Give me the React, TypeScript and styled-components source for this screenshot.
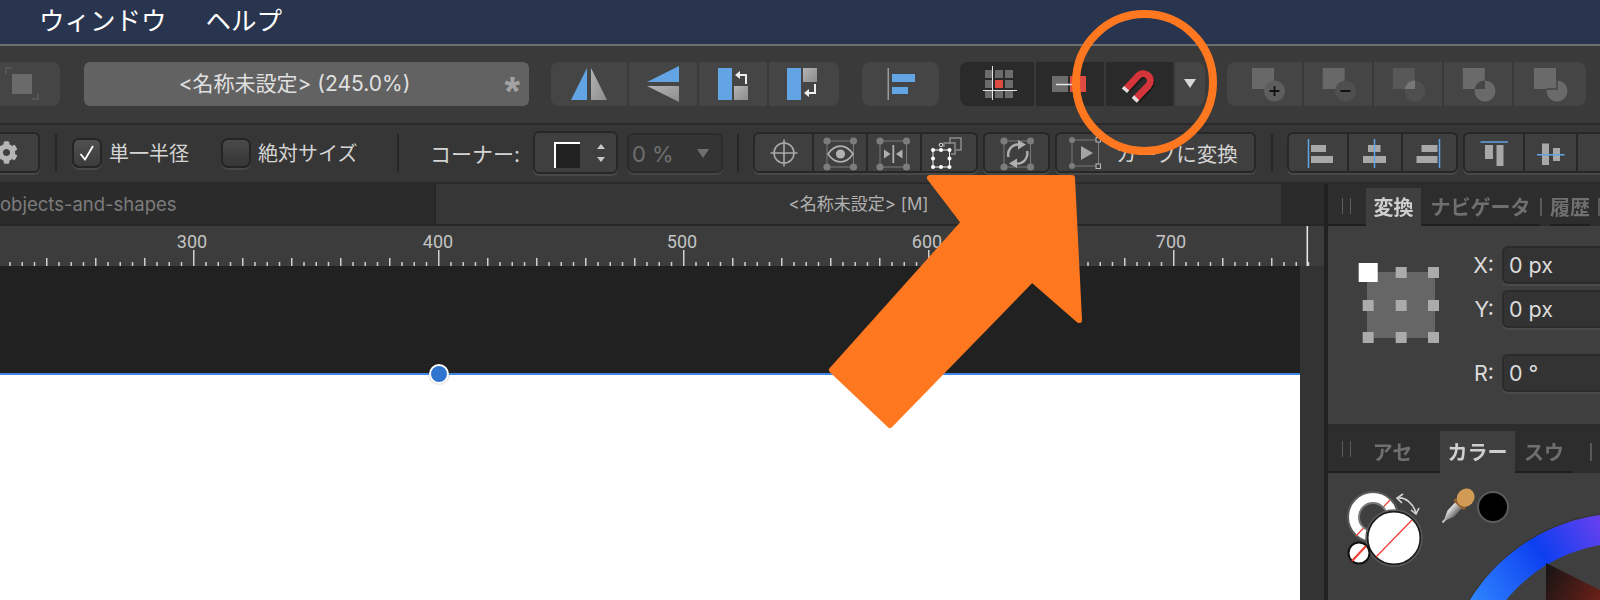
import React from 'react';
import styled, { createGlobalStyle } from 'styled-components';
import { FaCog } from 'react-icons/fa';

const CJK = '"Inter", "Noto Sans CJK JP", sans-serif';

const GlobalStyle = createGlobalStyle`
  html, body {
    margin: 0;
    padding: 0;
    background: #212121;
  }
  * {
    box-sizing: border-box;
  }
`;

const Page = styled.div`
  position: relative;
  width: 1600px;
  height: 600px;
  overflow: hidden;
  font-family: ${CJK};
`;

const MenuBar = styled.div`
  display: flex;
  align-items: center;
  gap: 39px;
  height: 44px;
  padding: 0 0 2px 39px;
  background: #29354f;
  color: #fff;
  font-size: 25.5px;
  line-height: 1;
`;

const RowOne = styled.div`
  display: flex;
  align-items: flex-start;
  height: 81px;
  padding-top: 16px;
  background: #3a3a3a;
  border-top: 2px solid #6e6e6e;
  border-bottom: 2px solid #292929;
  overflow: hidden;
`;

const RowTwo = styled.div`
  display: flex;
  align-items: center;
  height: 59px;
  padding-bottom: 2px;
  background: #363636;
  border-bottom: 2px solid #292929;
  overflow: hidden;
  color: #d4d4d4;
  font-size: 20px;
`;

const FlatGroup = styled.div<{ $w: number; $ml?: number; $dark?: boolean; $cut?: boolean }>`
  display: flex;
  flex: none;
  width: ${p => p.$w}px;
  height: 44px;
  margin-left: ${p => p.$ml || 0}px;
  border-radius: ${p => (p.$cut ? '0 8px 8px 0' : '8px')};
  background: ${p => (p.$dark ? '#2a2a2a' : '#454545')};
  overflow: hidden;
`;

const FlatCell = styled.div<{ $w: number; $first?: boolean; $light?: boolean }>`
  display: flex;
  align-items: center;
  justify-content: center;
  flex: none;
  width: ${p => p.$w}px;
  border-left: ${p => (p.$first ? 'none' : '2px solid #393939')};
  background: ${p => (p.$light ? '#454545' : 'transparent')};
`;

const TitleField = styled.div`
  position: relative;
  flex: none;
  width: 445px;
  height: 44px;
  margin-left: 24px;
  padding-right: 24px;
  border-radius: 6px;
  background: #626262;
  color: #e0e0e0;
  font-size: 21px;
  line-height: 44px;
  text-align: center;
`;

const DirtyStar = styled.span`
  position: absolute;
  top: 7px;
  right: 9px;
  color: #a3a3a3;
  font-family: "Liberation Sans", sans-serif;
  font-size: 40px;
  font-weight: 700;
  line-height: 44px;
`;

const Glyph = styled.svg<{ $w?: number; $h?: number; $mt?: number }>`
  display: block;
  flex: none;
  width: ${p => p.$w || 44}px;
  height: ${p => p.$h || 44}px;
  margin-top: ${p => p.$mt || 0}px;
`;

const InsetGroup = styled.div<{ $w: number; $ml?: number; $h?: number }>`
  display: flex;
  flex: none;
  width: ${p => p.$w}px;
  height: ${p => p.$h || 41}px;
  margin-left: ${p => p.$ml || 0}px;
  border: 2px solid #272727;
  border-radius: 6px;
  background: #3f3f3f;
  box-shadow: 0 2px 0 #484848;
  overflow: hidden;
`;

const InsetCell = styled.div<{ $w?: number; $first?: boolean }>`
  display: flex;
  align-items: center;
  justify-content: center;
  flex: ${p => (p.$w ? 'none' : '1')};
  width: ${p => (p.$w ? `${p.$w}px` : 'auto')};
  border-left: ${p => (p.$first ? 'none' : '2px solid #272727')};
`;

const ConvertCell = styled(InsetCell)`
  justify-content: flex-start;
  padding-left: 12px;
`;

const GearButton = styled(InsetGroup)`
  justify-content: flex-start;
  align-items: center;
  border-left: none;
  border-radius: 0 6px 6px 0;
  color: #b5b5b5;
  svg {
    margin-left: -5px;
  }
`;

const Separator = styled.div<{ $ml: number }>`
  flex: none;
  width: 2px;
  height: 38px;
  margin-left: ${p => p.$ml}px;
  background: #272727;
`;

const CheckItem = styled.label<{ $ml: number; $w: number }>`
  display: flex;
  flex: none;
  align-items: center;
  gap: 7px;
  width: ${p => p.$w}px;
  margin-left: ${p => p.$ml}px;
  white-space: nowrap;
`;

const CheckBox = styled.span<{ $checked?: boolean }>`
  display: flex;
  align-items: center;
  justify-content: center;
  flex: none;
  width: 30px;
  height: 30px;
  border: 2px solid #252525;
  border-radius: 7px;
  background: ${p => (p.$checked ? 'linear-gradient(#505050, #3c3c3c)' : 'linear-gradient(#4a4a4a, #353535)')};
  box-shadow: 0 2px 0 #484848;
`;

const CornerLabel = styled.span`
  flex: none;
  width: 87px;
  margin-left: 31px;
  font-size: 21px;
  white-space: nowrap;
`;

const PercentField = styled.div`
  display: flex;
  flex: none;
  align-items: center;
  justify-content: space-between;
  width: 96px;
  height: 40px;
  margin-left: 9px;
  padding: 2px 12px 0 3px;
  border: 2px solid #2a2a2a;
  border-radius: 6px;
  background: #343434;
  box-shadow: 0 2px 0 #444;
  color: #6f6f6f;
  font-size: 22px;
`;

const ConvertLabel = styled.span`
  margin-left: 15px;
  font-size: 20.5px;
  white-space: nowrap;
`;

const Workspace = styled.div`
  display: flex;
  height: 416px;
`;

const Editor = styled.div`
  display: flex;
  flex-direction: column;
  flex: none;
  width: 1324px;
`;

const DocTabs = styled.div`
  display: flex;
  flex: none;
  height: 42px;
  border-bottom: 2px solid #272727;
  background: #2b2b2b;
  line-height: 40px;
`;

const DocTab = styled.div<{ $w: number; $active?: boolean }>`
  flex: none;
  width: ${p => p.$w}px;
  overflow: hidden;
  white-space: nowrap;
  font-size: ${p => (p.$active ? '17px' : '18.5px')};
  background: ${p => (p.$active ? '#363636' : 'transparent')};
  color: ${p => (p.$active ? '#b0b0b0' : '#7c7c7c')};
  text-align: ${p => (p.$active ? 'center' : 'left')};
  border-right: ${p => (p.$active ? 'none' : '2px solid #272727')};
`;

const RulerBar = styled.svg`
  display: block;
  flex: none;
  width: 1324px;
  height: 40px;
  background: #3c3c3c;
`;

const CanvasRow = styled.div`
  display: flex;
  flex: 1;
`;

const Canvas = styled.div`
  position: relative;
  flex: none;
  width: 1300px;
  background: linear-gradient(#212121 0, #212121 107px, #3f86e0 107px, #3f86e0 109px, #fff 109px);
`;

const Handle = styled.span`
  position: absolute;
  top: 98px;
  left: 429px;
  width: 20px;
  height: 20px;
  border: 2px solid #fff;
  border-radius: 50%;
  background: #2f74cf;
  box-shadow: 0 0 2px rgba(0, 0, 0, 0.35);
`;

const ScrollStrip = styled.div`
  flex: 1;
  background: #333;
`;

const SidePanel = styled.div`
  display: flex;
  flex-direction: column;
  flex: none;
  width: 272px;
  margin-left: 4px;
  background: #3f3f3f;
`;

const TabRow = styled.div<{ $h: number }>`
  display: flex;
  flex: none;
  align-items: stretch;
  height: ${p => p.$h}px;
  padding-top: 4px;
  background: #2d2d2d;
  font-size: 20px;
  font-weight: 700;
`;

const Grip = styled.span`
  flex: none;
  width: 38px;
  position: relative;
  border-bottom: 2px solid #1f1f1f;
  &::after {
    content: '';
    position: absolute;
    top: 10px;
    left: 14px;
    width: 7px;
    height: 16px;
    border-left: 1.5px solid #5c5c5c;
    border-right: 1.5px solid #5c5c5c;
  }
`;

const PanelTab = styled.div<{ $w: number; $active?: boolean; $pr?: number }>`
  display: flex;
  flex: none;
  align-items: center;
  justify-content: center;
  width: ${p => p.$w}px;
  padding-right: ${p => p.$pr || 0}px;
  white-space: nowrap;
  background: ${p => (p.$active ? '#3f3f3f' : 'transparent')};
  border-bottom: 2px solid ${p => (p.$active ? '#3f3f3f' : '#1f1f1f')};
  color: ${p => (p.$active ? '#cfcfcf' : '#6f6f6f')};
  span {
    filter: blur(0.6px);
  }
`;

const TabRule = styled.span<{ $ml?: number }>`
  flex: none;
  width: 2px;
  height: 18px;
  align-self: center;
  margin: 0 8px 0 ${p => p.$ml || 0}px;
  background: #5a5a5a;
`;

const TabFill = styled.div`
  flex: 1;
  border-bottom: 2px solid #1f1f1f;
`;

const TransformBody = styled.div`
  display: flex;
  flex: none;
  height: 201px;
  padding: 20px 0 0 28px;
  border-bottom: 3px solid #2c2c2c;
`;

const FieldColumn = styled.div`
  display: flex;
  flex-direction: column;
  margin-left: 21px;
`;

const FieldRow = styled.div<{ $mt?: number }>`
  display: flex;
  align-items: center;
  gap: 8px;
  height: 38px;
  margin-top: ${p => p.$mt || 0}px;
  color: #dcdcdc;
  font-size: 21.5px;
`;

const FieldLabel = styled.span`
  flex: none;
  width: 27px;
  text-align: right;
`;

const FieldInput = styled.div`
  flex: none;
  width: 120px;
  height: 38px;
  padding-left: 5px;
  border: 2px solid #2b2b2b;
  border-right: none;
  border-radius: 6px 0 0 6px;
  background: #333;
  box-shadow: 0 2px 0 #4a4a4a;
  line-height: 34px;
`;

const ColorBody = styled.svg`
  display: block;
  width: 272px;
  height: 127px;
`;

const Overlay = styled.svg`
  position: absolute;
  top: 0;
  left: 0;
  width: 1600px;
  height: 600px;
  pointer-events: none;
`;

const rulerTicks = Array.from({ length: 108 }, (_, i) => i);
const rulerLabels = [
  { text: '300', x: 192 },
  { text: '400', x: 438 },
  { text: '500', x: 682 },
  { text: '600', x: 927 },
  { text: '700', x: 1171 },
];

const anchorXs = [6.7, 39.7, 72];
const anchorYs = [24, 57, 89];

// corner handles shared by the transform-mode icons
const FrameDots = ({ x1, x2, y1, y2 }: { x1: number; x2: number; y1: number; y2: number }) => (
  <g>
    <rect x={x1} y={y1} width={x2 - x1} height={y2 - y1} fill="none" stroke="#7a7a7a" strokeWidth="1" />
    {[x1, x2].map(x => [y1, y2].map(y => <circle key={`${x}-${y}`} cx={x} cy={y} r="3.6" fill="#7c7c7c" />))}
  </g>
);

const App: React.FC = () => {
  return (
    <Page>
      <GlobalStyle />
      <MenuBar>
        <span>ウィンドウ</span>
        <span>ヘルプ</span>
      </MenuBar>

      <RowOne>
        <FlatGroup $w={60} $cut>
          <FlatCell $w={60} $first>
            <Glyph $w={60} viewBox="0 62 60 44">
              <path d="M6 74V68H12M38 93V99H32" fill="none" stroke="#555" strokeWidth="2" />
              <rect x="12" y="74" width="20" height="20" fill="#6a6a6a" />
            </Glyph>
          </FlatCell>
        </FlatGroup>
        <TitleField>
          &lt;名称未設定&gt; (245.0%)
          <DirtyStar>*</DirtyStar>
        </TitleField>

        <FlatGroup $w={288} $ml={22}>
          <FlatCell $w={76} $first>
            <Glyph viewBox="570 62 44 44">
              <defs>
                <linearGradient id="grayFade" x1="0" y1="0" x2="1" y2="1">
                  <stop offset="0" stopColor="#b4b4b4" />
                  <stop offset="1" stopColor="#8c8c8c" />
                </linearGradient>
              </defs>
              <polygon points="574,100 590,68 590,100" fill="#62a4e4" />
              <polygon points="594,68 594,100 610,100" fill="url(#grayFade)" />
            </Glyph>
          </FlatCell>
          <FlatCell $w={70}>
            <Glyph viewBox="640 62 44 44">
              <polygon points="646,82 678,66 678,82" fill="#62a4e4" />
              <polygon points="646,86 678,86 678,102" fill="url(#grayFade)" />
            </Glyph>
          </FlatCell>
          <FlatCell $w={70}>
            <Glyph viewBox="709 62 44 44">
              <rect x="716" y="68" width="14" height="32" fill="#62a4e4" />
              <rect x="732" y="86" width="14" height="14" fill="url(#grayFade)" />
              <path d="M744 84V75H737" fill="none" stroke="#eee" strokeWidth="2" />
              <polygon points="733,75 738,71 738,79" fill="#eee" />
            </Glyph>
          </FlatCell>
          <FlatCell $w={72}>
            <Glyph viewBox="781 62 44 44">
              <rect x="786" y="68" width="14" height="32" fill="#62a4e4" />
              <rect x="802" y="68" width="14" height="14" fill="url(#grayFade)" />
              <path d="M814 84V93H807" fill="none" stroke="#eee" strokeWidth="2" />
              <polygon points="803,93 808,89 808,97" fill="#eee" />
            </Glyph>
          </FlatCell>
        </FlatGroup>

        <FlatGroup $w={77} $ml={23}>
          <FlatCell $w={77} $first>
            <Glyph viewBox="880 62 44 44">
              <rect x="888.5" y="68" width="1.5" height="32" fill="#9a9a9a" />
              <rect x="893" y="74" width="23" height="8" fill="#62a4e4" />
              <rect x="893" y="87" width="16" height="7" fill="#62a4e4" />
            </Glyph>
          </FlatCell>
        </FlatGroup>

        <FlatGroup $w={245} $ml={21} $dark>
          <FlatCell $w={74} $first>
            <Glyph viewBox="976 62 44 44">
              {[986, 996, 1006].map(x =>
                [70, 80, 90].map(y => (
                  <rect
                    key={`${x}-${y}`}
                    x={x}
                    y={y}
                    width="8"
                    height="8"
                    fill={x === 996 && y === 80 ? '#dd4b41' : '#6c6c6c'}
                  />
                ))
              )}
              <path d="M993.5 66V100M984 90.5H1018" stroke="#e4e4e4" strokeWidth="1" />
            </Glyph>
          </FlatCell>
          <FlatCell $w={70}>
            <Glyph viewBox="1048 62 44 44">
              <rect x="1052" y="76" width="16" height="16" fill="#6c6c6c" />
              <rect x="1070" y="76" width="16" height="16" fill="#dd4b41" />
              <path d="M1056 84.5H1080" stroke="#e4e4e4" strokeWidth="1.5" />
            </Glyph>
          </FlatCell>
          <FlatCell $w={69}>
            <Glyph viewBox="0 0 44 44">
              <path d="M8 27L20 14A7 7 0 0 1 30.5 23.5L18 36.5" transform="translate(0.9 1.5)" fill="none" stroke="#161616" strokeWidth="7" />
              <path d="M8 27L20 14A7 7 0 0 1 30.5 23.5L18 36.5" fill="none" stroke="#d3353a" strokeWidth="7" />
              <path d="M6.4 28.8L8.7 26.2M16.2 38.4L18.7 35.8" fill="none" stroke="#e2dcdc" strokeWidth="7" />
            </Glyph>
          </FlatCell>
          <FlatCell $w={32} $light>
            <Glyph $w={14} $h={12} viewBox="0 0 14 12">
              <polygon points="1,1 13,1 7,10" fill="#d8d8d8" />
            </Glyph>
          </FlatCell>
        </FlatGroup>

        <FlatGroup $w={358.5} $ml={22}>
          <FlatCell $w={75} $first>
            <Glyph viewBox="1243.5 62 44 44">
              <rect x="1252.5" y="68" width="22" height="21" fill="#686868" />
              <circle cx="1275" cy="91" r="10.5" fill="#5e5e5e" />
              <path d="M1270 91H1280M1275 86V96" stroke="#111" strokeWidth="1.8" />
            </Glyph>
          </FlatCell>
          <FlatCell $w={70}>
            <Glyph viewBox="1316 62 44 44">
              <rect x="1322.7" y="68" width="22" height="21" fill="#686868" />
              <circle cx="1345.5" cy="91" r="10.5" fill="#4f4f4f" />
              <path d="M1340.5 91H1350.5" stroke="#111" strokeWidth="1.8" />
            </Glyph>
          </FlatCell>
          <FlatCell $w={70}>
            <Glyph viewBox="1386 62 44 44">
              <rect x="1392.8" y="68" width="22" height="21" fill="#585858" />
              <circle cx="1415" cy="91" r="10.5" fill="#4f4f4f" />
              <path d="M1415 80.5A10.5 10.5 0 0 0 1404.5 89H1415Z" fill="#777" />
            </Glyph>
          </FlatCell>
          <FlatCell $w={70}>
            <Glyph viewBox="1456 62 44 44">
              <rect x="1462.8" y="68" width="22" height="21" fill="#6a6a6a" />
              <circle cx="1485" cy="91" r="10.5" fill="#6a6a6a" />
              <path d="M1485 80.5A10.5 10.5 0 0 0 1474.5 89H1485Z" fill="#464646" />
            </Glyph>
          </FlatCell>
          <FlatCell $w={73.5}>
            <Glyph viewBox="1526 62 44 44">
              <rect x="1532" y="68" width="22" height="21" fill="#6a6a6a" />
              <circle cx="1555" cy="91" r="10.5" fill="#6a6a6a" />
              <path d="M1555 80.5V89H1544.5" fill="none" stroke="#444" strokeWidth="1.5" />
            </Glyph>
          </FlatCell>
        </FlatGroup>
      </RowOne>

      <RowTwo>
        <GearButton $w={40}>
          <FaCog size={23} />
        </GearButton>
        <Separator $ml={15} />
        <CheckItem $ml={15} $w={117}>
          <CheckBox $checked>
            <Glyph $w={18} $h={18} viewBox="0 0 18 18">
              <path d="M2.5 10L7 15.5L15 2" fill="none" stroke="#fff" strokeWidth="1.8" />
            </Glyph>
          </CheckBox>
          単一半径
        </CheckItem>
        <CheckItem $ml={32} $w={137}>
          <CheckBox />
          絶対サイズ
        </CheckItem>
        <Separator $ml={39} />
        <CornerLabel>コーナー:</CornerLabel>
        <InsetGroup $w={85} $ml={16} $h={43}>
          <InsetCell $first>
            <Glyph $w={81} $h={39} viewBox="535 132 81 39">
              <rect x="554" y="141" width="26" height="26" fill="#212121" />
              <path d="M555 167V142H580" fill="none" stroke="#fff" strokeWidth="2" />
              <polygon points="601,143 605,148 597,148" fill="#c9c9c9" />
              <polygon points="597,156 605,156 601,161" fill="#c9c9c9" />
            </Glyph>
          </InsetCell>
        </InsetGroup>
        <PercentField>
          0 %
          <Glyph $w={12} $h={10} viewBox="0 0 12 10">
            <polygon points="0,0 12,0 6,9" fill="#6f6f6f" />
          </Glyph>
        </PercentField>
        <Separator $ml={14} />
        <InsetGroup $w={225} $ml={14}>
          <InsetCell $w={57} $first>
            <Glyph viewBox="761 129 44 44">
              <circle cx="783" cy="151" r="10" fill="none" stroke="#a8a8a8" strokeWidth="1.6" />
              <path d="M783 137.5V164.5M769.5 151H796.5" stroke="#a8a8a8" strokeWidth="1.6" />
            </Glyph>
          </InsetCell>
          <InsetCell $w={54}>
            <Glyph viewBox="816 129 44 44">
              <FrameDots x1={825} x2={851.5} y1={139} y2={165} />
              <path d="M826 152C833 141.5 844 141.5 851 152C844 162.5 833 162.5 826 152Z" fill="#3f3f3f" stroke="#b0b0b0" strokeWidth="1.6" />
              <circle cx="838.5" cy="152" r="4.6" fill="#b0b0b0" />
            </Glyph>
          </InsetCell>
          <InsetCell $w={54}>
            <Glyph viewBox="871 129 44 44">
              <FrameDots x1={879} x2={905.5} y1={139} y2={165} />
              <path d="M892.3 143V161" stroke="#b0b0b0" strokeWidth="1.8" />
              <polygon points="883,147.5 889.5,152 883,156.5" fill="#b0b0b0" />
              <polygon points="901.5,147.5 895,152 901.5,156.5" fill="#b0b0b0" />
            </Glyph>
          </InsetCell>
          <InsetCell>
            <Glyph viewBox="927 129 44 44">
              <path d="M950 142V136H961V148H956M944 145V141H955V152H951" fill="none" stroke="#8c8c8c" strokeWidth="1.5" />
              <rect x="933" y="148" width="16.5" height="17" fill="none" stroke="#eee" strokeWidth="1" />
              {[933, 941, 949.5].map(x =>
                [148, 156.5, 165].map(y =>
                  x === 941 && y === 156.5 ? null : <circle key={`${x}-${y}`} cx={x} cy={y} r="2" fill="#fff" />
                )
              )}
              <circle cx="941" cy="143" r="1.8" fill="none" stroke="#ddd" strokeWidth="1" />
            </Glyph>
          </InsetCell>
        </InsetGroup>
        <InsetGroup $w={67} $ml={5}>
          <InsetCell $first>
            <Glyph viewBox="994 129 44 44">
              <FrameDots x1={1003} x2={1029.5} y1={139} y2={165} />
              <path d="M1007.5 155A10 10 0 0 1 1018 142.5" fill="none" stroke="#b0b0b0" strokeWidth="2.4" />
              <path d="M1026 149A10 10 0 0 1 1015 161.5" fill="none" stroke="#b0b0b0" strokeWidth="2.4" />
              <polygon points="1017,138 1017,147.5 1025,142.5" fill="#b0b0b0" />
              <polygon points="1016,156.5 1016,166 1008,161.5" fill="#b0b0b0" />
            </Glyph>
          </InsetCell>
        </InsetGroup>
        <InsetGroup $w={201} $ml={5}>
          <ConvertCell $first>
            <Glyph $w={32} $h={36} viewBox="1067 134 32 36">
              <rect x="1070" y="139" width="26.5" height="26" fill="none" stroke="#7a7a7a" strokeWidth="1" />
              <circle cx="1070" cy="139" r="3" fill="#7c7c7c" />
              <circle cx="1070" cy="165" r="3" fill="#7c7c7c" />
              <rect x="1094" y="136.5" width="4.5" height="4.5" fill="#3f3f3f" stroke="#bbb" />
              <rect x="1094" y="163" width="4.5" height="4.5" fill="#3f3f3f" stroke="#bbb" />
              <polygon points="1079,145 1079,159 1091,152" fill="#a4a4a4" />
            </Glyph>
            <ConvertLabel>カーブに変換</ConvertLabel>
          </ConvertCell>
        </InsetGroup>
        <Separator $ml={15} />
        <InsetGroup $w={171} $ml={14}>
          <InsetCell $w={58} $first>
            <Glyph viewBox="1294 129 44 44">
              <path d="M1306.5 137V166" stroke="#62a4e4" strokeWidth="1.5" />
              <rect x="1309" y="143" width="15" height="7" fill="#a8a8a8" />
              <rect x="1309" y="154" width="22" height="7" fill="#a8a8a8" />
            </Glyph>
          </InsetCell>
          <InsetCell $w={54}>
            <Glyph viewBox="1350 129 44 44">
              <rect x="1365" y="143" width="12.5" height="7" fill="#a8a8a8" />
              <rect x="1360" y="154" width="23" height="7" fill="#a8a8a8" />
              <path d="M1371.5 137V166" stroke="#62a4e4" strokeWidth="1.5" />
            </Glyph>
          </InsetCell>
          <InsetCell>
            <Glyph viewBox="1406 129 44 44">
              <path d="M1437.5 137V166" stroke="#62a4e4" strokeWidth="1.5" />
              <rect x="1419.5" y="143" width="16" height="7" fill="#a8a8a8" />
              <rect x="1414.5" y="154" width="21" height="7" fill="#a8a8a8" />
            </Glyph>
          </InsetCell>
        </InsetGroup>
        <InsetGroup $w={220} $ml={5}>
          <InsetCell $w={58} $first>
            <Glyph viewBox="1472 129 44 44">
              <path d="M1480.5 140H1508" stroke="#62a4e4" strokeWidth="1.5" />
              <rect x="1485" y="143" width="8" height="14" fill="#a8a8a8" />
              <rect x="1496.5" y="143" width="7" height="21" fill="#a8a8a8" />
            </Glyph>
          </InsetCell>
          <InsetCell $w={53}>
            <Glyph viewBox="1527 129 44 44">
              <rect x="1540" y="141.5" width="7" height="21.5" fill="#a8a8a8" />
              <rect x="1551" y="146" width="7" height="13" fill="#a8a8a8" />
              <path d="M1535 152.7H1562.5" stroke="#62a4e4" strokeWidth="1.5" />
            </Glyph>
          </InsetCell>
          <InsetCell>
            <Glyph viewBox="1582 129 44 44">
              <rect x="1594" y="146" width="8" height="14" fill="#a8a8a8" />
              <path d="M1589 163H1620" stroke="#62a4e4" strokeWidth="1.5" />
            </Glyph>
          </InsetCell>
        </InsetGroup>
      </RowTwo>

      <Workspace>
        <Editor>
          <DocTabs>
            <DocTab $w={436}>objects-and-shapes</DocTab>
            <DocTab $w={845} $active>
              &lt;名称未設定&gt; [M]
            </DocTab>
          </DocTabs>
          <RulerBar viewBox="0 226 1324 40">
            {rulerTicks.map(i => {
              const x = 193 + (i - 16) * 12.25;
              const h = (i - 16) % 20 === 0 ? 16 : (i - 16) % 4 === 0 ? 8 : 4;
              return <rect key={i} x={x} y={266 - h} width="1.5" height={h} fill="#cfcfcf" />;
            })}
            {rulerLabels.map(l => (
              <text key={l.text} x={l.x} y={247.5} textAnchor="middle" fill="#c4c4c4" fontSize="18" fontFamily="Roboto, sans-serif">
                {l.text}
              </text>
            ))}
            <rect x="1306.5" y="226" width="1.6" height="40" fill="#e6e6e6" />
          </RulerBar>
          <CanvasRow>
            <Canvas>
              <Handle />
            </Canvas>
            <ScrollStrip />
          </CanvasRow>
        </Editor>

        <SidePanel>
          <TabRow $h={42}>
            <Grip />
            <PanelTab $w={55} $active>
              <span>変換</span>
            </PanelTab>
            <PanelTab $w={119}>
              <span>ナビゲータ</span>
            </PanelTab>
            <TabRule />
            <PanelTab $w={40}>
              <span>履歴</span>
            </PanelTab>
            <TabRule $ml={8} />
            <TabFill />
          </TabRow>
          <TransformBody>
            <Glyph $w={90} $h={125} $mt={-3} viewBox="0 0 90 125">
              <rect x="11" y="29" width="68" height="66" fill="#666" />
              {anchorXs.map(x =>
                anchorYs.map(y =>
                  x === anchorXs[0] && y === anchorYs[0] ? null : (
                    <rect key={`${x}-${y}`} x={x} y={y} width="11" height="11" fill="#ababab" />
                  )
                )
              )}
              <rect x="2.7" y="20" width="19" height="19" fill="#fff" />
            </Glyph>
            <FieldColumn>
              <FieldRow>
                <FieldLabel>X:</FieldLabel>
                <FieldInput>0 px</FieldInput>
              </FieldRow>
              <FieldRow $mt={6}>
                <FieldLabel>Y:</FieldLabel>
                <FieldInput>0 px</FieldInput>
              </FieldRow>
              <FieldRow $mt={26}>
                <FieldLabel>R:</FieldLabel>
                <FieldInput>0 °</FieldInput>
              </FieldRow>
            </FieldColumn>
          </TransformBody>
          <TabRow $h={46}>
            <Grip />
            <PanelTab $w={74} $pr={21}>
              <span>アセ</span>
            </PanelTab>
            <PanelTab $w={75} $active>
              <span>カラー</span>
            </PanelTab>
            <PanelTab $w={58}>
              <span>スウ</span>
            </PanelTab>
            <TabRule $ml={17} />
            <TabFill />
          </TabRow>
          <ColorBody viewBox="1328 473 272 127">
            <defs>
              <linearGradient id="wheelArc" gradientUnits="userSpaceOnUse" x1="1470" y1="600" x2="1600" y2="515">
                <stop offset="0" stopColor="#2f86ff" />
                <stop offset="0.55" stopColor="#0d3ff0" />
                <stop offset="1" stopColor="#6a40ee" />
              </linearGradient>
              <linearGradient id="triFade" gradientUnits="userSpaceOnUse" x1="1546" y1="570" x2="1600" y2="600">
                <stop offset="0" stopColor="#191515" />
                <stop offset="1" stopColor="#6b2018" />
              </linearGradient>
              <linearGradient id="dropMetal" x1="0" y1="0" x2="1" y2="0">
                <stop offset="0" stopColor="#e6e6e6" />
                <stop offset="1" stopColor="#6a6a6a" />
              </linearGradient>
            </defs>

            <circle cx="1373" cy="517" r="25" fill="#fff" stroke="#5a5a5a" strokeWidth="2" />
            <path d="M1356 536L1390 500" stroke="#ef3b2d" strokeWidth="1.2" />
            <circle cx="1373" cy="517" r="14" fill="#3f3f3f" stroke="#777" strokeWidth="2" />
            <circle cx="1394" cy="538" r="26.5" fill="#fff" stroke="#1d1d1d" strokeWidth="2" />
            <circle cx="1394" cy="538" r="28" fill="none" stroke="#5a5a5a" strokeWidth="1.5" />
            <path d="M1376 557L1412 520" stroke="#ef3b2d" strokeWidth="1.2" />
            <circle cx="1359" cy="553" r="10.5" fill="#fff" stroke="#111" strokeWidth="2" />
            <path d="M1352 561L1366 546" stroke="#ef3b2d" strokeWidth="2" />
            <path d="M1398 498C1405 497 1413 503 1416 513" fill="none" stroke="#d4d4d4" strokeWidth="1.6" />
            <path d="M1403 494L1397 498L1402 503M1411 510L1416 514L1419 508" fill="none" stroke="#d4d4d4" strokeWidth="1.6" />

            <g transform="translate(1442.5 522.5) rotate(43)">
              <rect x="-1" y="-6" width="2" height="6" fill="#c4c4c4" />
              <path d="M-1.5 -5L-4.5 -12V-24H4.5V-12L1.5 -5Z" fill="url(#dropMetal)" />
              <rect x="-5" y="-29" width="10" height="6" fill="#a8733a" />
              <rect x="-7.5" y="-27" width="15" height="3.5" rx="1.7" fill="#8d5f30" />
              <ellipse cx="0" cy="-34" rx="8.5" ry="9.5" fill="#d19a55" />
            </g>

            <circle cx="1493" cy="507" r="15" fill="#000" stroke="#5c5c5c" strokeWidth="2" />

            <circle cx="1625" cy="695" r="167" fill="none" stroke="url(#wheelArc)" strokeWidth="30" />
            <circle cx="1625" cy="695" r="182.5" fill="none" stroke="#333" strokeWidth="1" />
            <polygon points="1546,563 1600,590 1600,600 1546,600" fill="url(#triFade)" />
          </ColorBody>
        </SidePanel>
      </Workspace>

      <Overlay viewBox="0 0 1600 600">
        <circle cx="1144.5" cy="82.5" r="68.5" fill="none" stroke="#ff7820" strokeWidth="8" />
        <polygon
          points="930,178 1072,178 1079,320 1032,279 890,425 832,370 964,222.5"
          fill="#ff7820"
          stroke="#ff7820"
          strokeWidth="6"
          strokeLinejoin="round"
        />
      </Overlay>
    </Page>
  );
};

export default App;
